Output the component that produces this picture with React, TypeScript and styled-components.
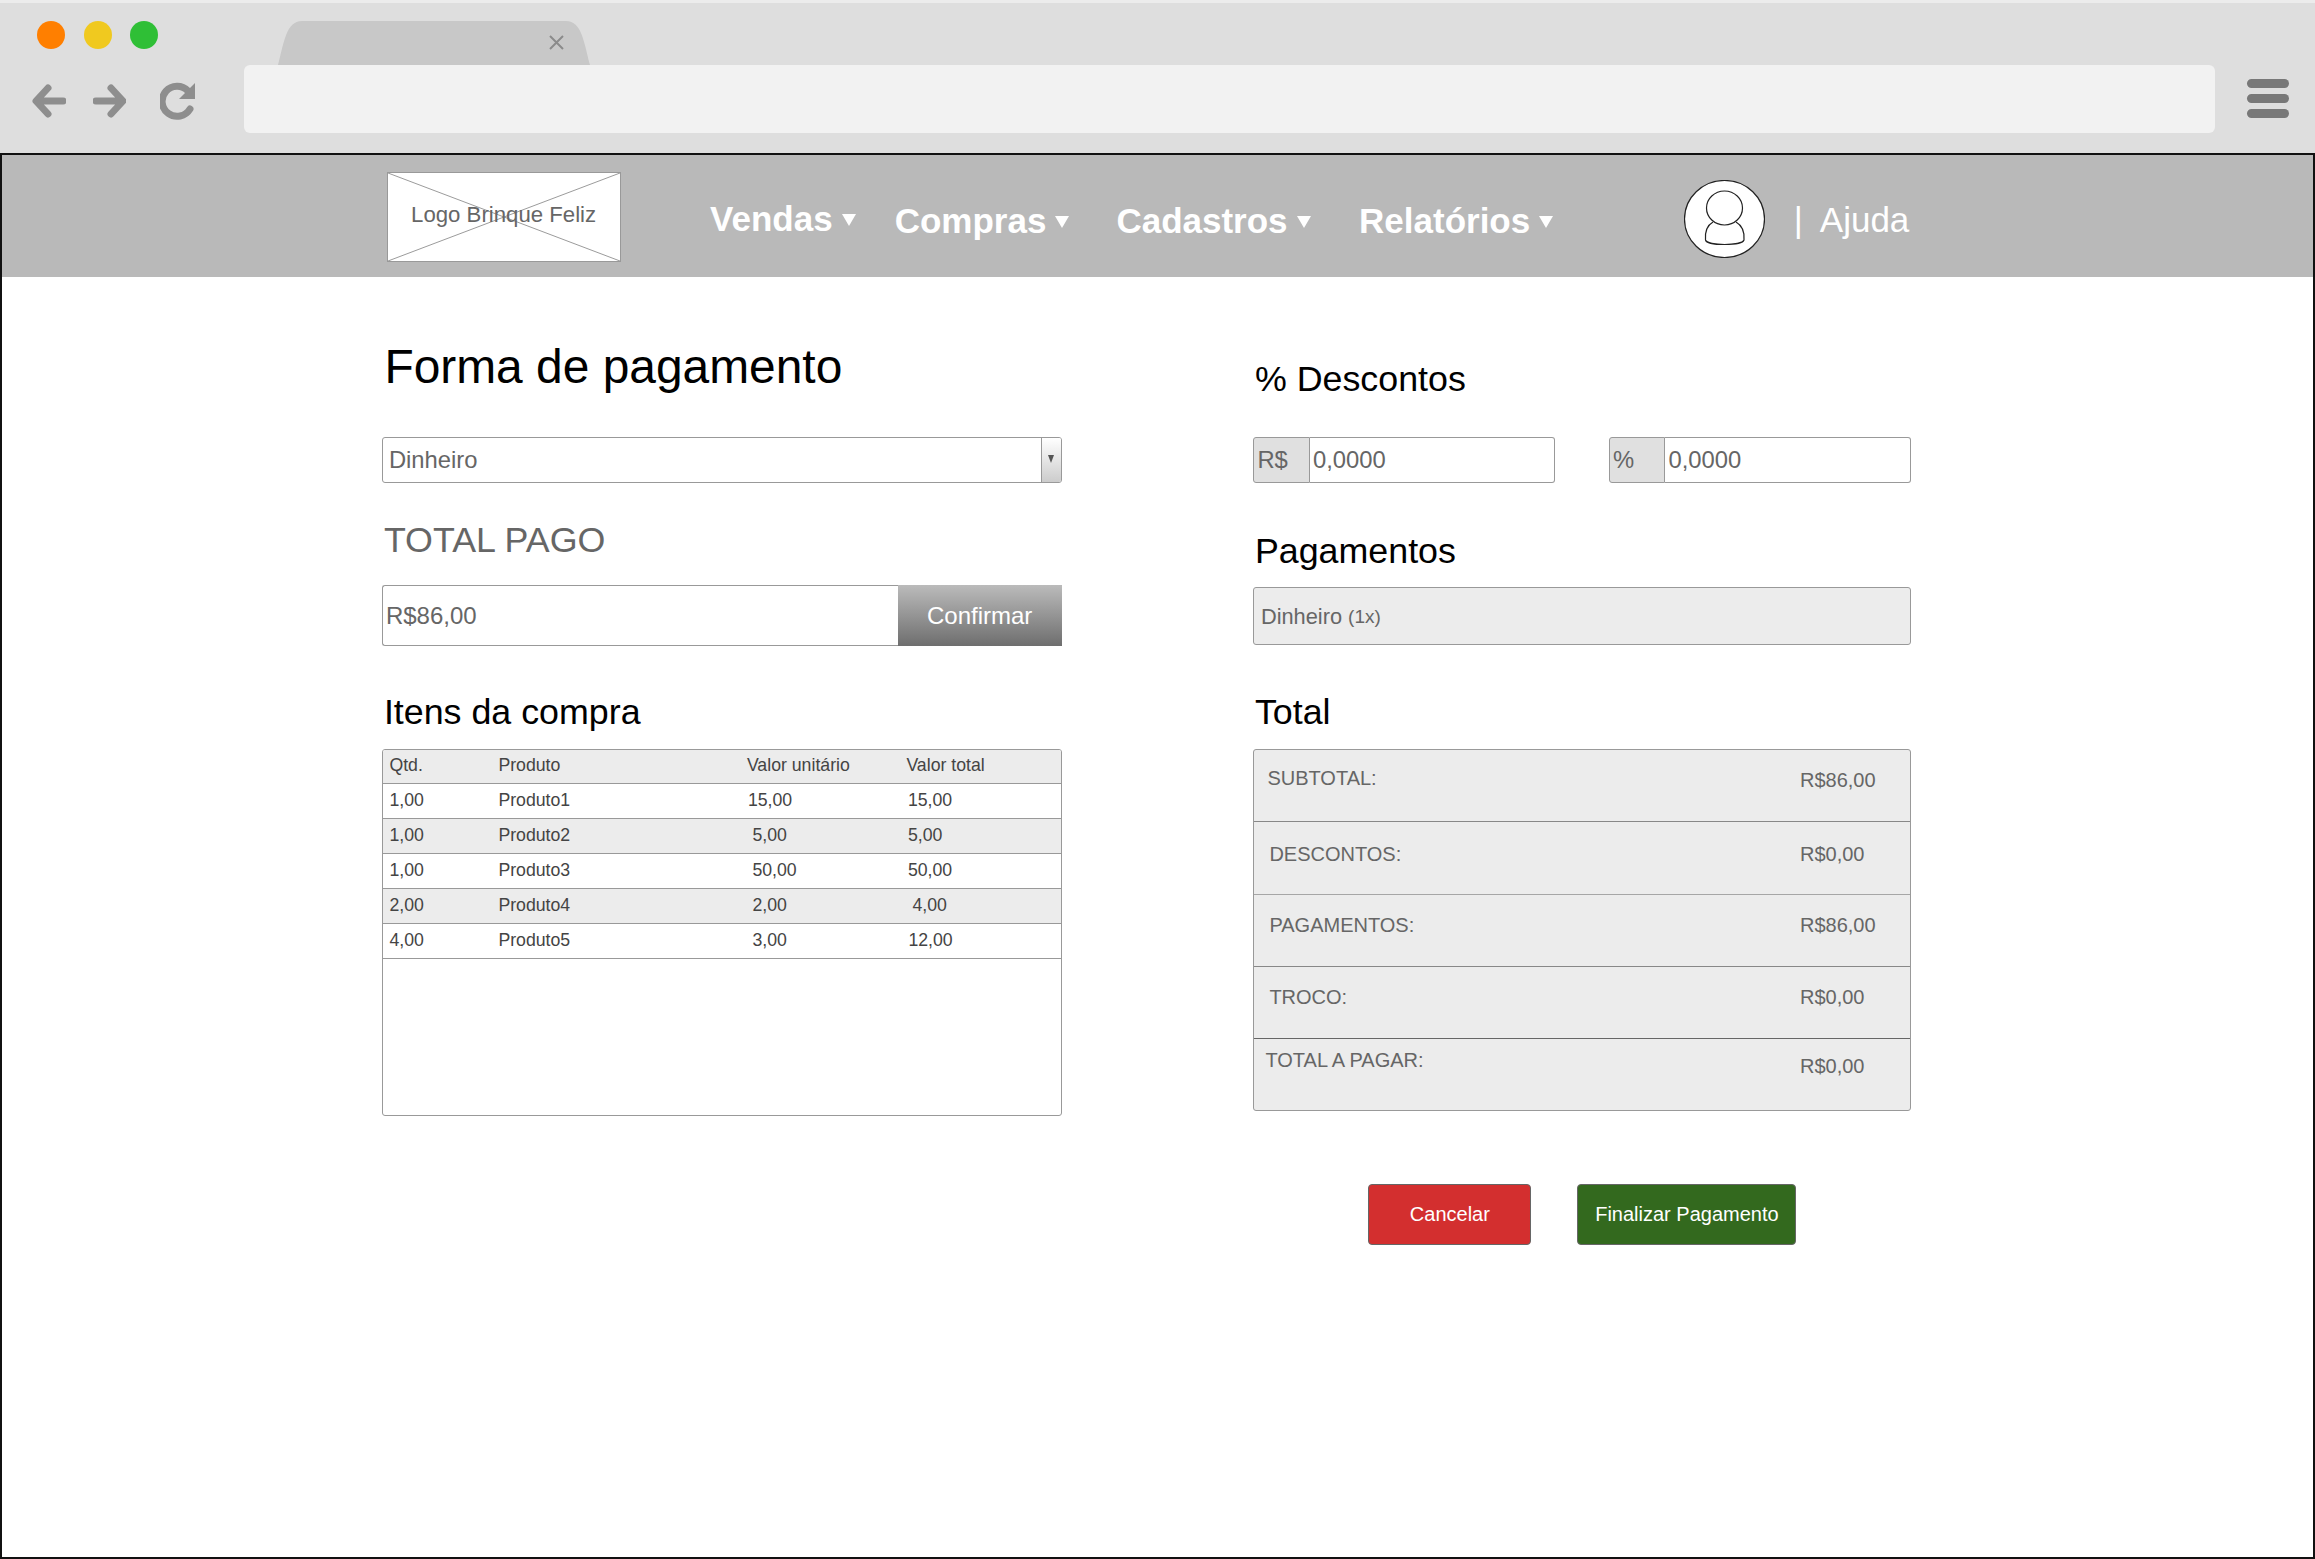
import React from "react";
import styled, { createGlobalStyle } from "styled-components";

const Global = createGlobalStyle`
  html, body { margin: 0; padding: 0; background: #fff; }
  body { font-family: "Liberation Sans", Arial, sans-serif; }
  * { box-sizing: border-box; }
`;

const Page = styled.div`
  width: 2315px;
  height: 1559px;
  display: flex;
  flex-direction: column;
  overflow: hidden;
`;

const ChromeBar = styled.header`
  height: 153px;
  flex: none;
  background: #dedede;
  border-top: 3px solid #ececec;
  display: flex;
  flex-direction: column;
`;

const TabRow = styled.div`
  height: 62px;
  flex: none;
  display: flex;
  align-items: flex-end;
  padding-left: 37px;
  gap: 18.5px;
`;

const Dot = styled.span<{ $color: string }>`
  width: 28px;
  height: 28px;
  border-radius: 50%;
  background: ${(p) => p.$color};
  align-self: flex-start;
  margin-top: 18px;
`;

const TabShape = styled.svg`
  width: 312px;
  height: 44px;
  margin-left: 101.5px;
  display: block;
`;

const Toolbar = styled.div`
  height: 67.5px;
  flex: none;
  display: flex;
  align-items: center;
  padding-left: 32px;
`;

const NavIcon = styled.svg<{ $left: number; $width: number }>`
  width: ${(p) => p.$width}px;
  height: 38px;
  margin-left: ${(p) => p.$left}px;
  margin-top: 4px;
  flex: none;
`;

const UrlBar = styled.div`
  width: 1971px;
  height: 67.5px;
  margin-left: 47.5px;
  background: #f2f2f2;
  border-radius: 6px;
  flex: none;
`;

const Burger = styled.div`
  margin-left: 32px;
  width: 42px;
  display: flex;
  flex-direction: column;
  gap: 6px;
`;

const BurgerBar = styled.span`
  height: 9px;
  border-radius: 5px;
  background: #787878;
`;

const Frame = styled.div`
  flex: 1;
  border: 2px solid #111;
  border-top-width: 2.5px;
  border-right-width: 2.5px;
  display: flex;
  flex-direction: column;
  min-height: 0;
`;

const NavBar = styled.nav`
  height: 122px;
  flex: none;
  background: #b9b9b9;
  display: flex;
  align-items: center;
  padding-left: 384.6px;
  color: #fff;
`;

const Logo = styled.div`
  position: relative;
  width: 234px;
  height: 90px;
  margin-top: 2px;
  flex: none;
  background: #fff;
  border: 1px solid #999;
  display: flex;
  align-items: center;
  justify-content: center;
  font-size: 22.2px;
  color: #666;
`;

const LogoCross = styled.svg`
  position: absolute;
  inset: 0;
  width: 100%;
  height: 100%;
`;

const LogoText = styled.span`
  position: relative;
  margin-top: -4px;
  white-space: nowrap;
`;

const MenuList = styled.div`
  display: flex;
  margin-left: 89.5px;
`;

const MenuItem = styled.div<{ $left?: number; $drop?: number }>`
  display: flex;
  align-items: center;
  margin-left: ${(p) => p.$left ?? 0}px;
  margin-top: ${(p) => p.$drop ?? 0}px;
  font-size: 35px;
  font-weight: 700;
  line-height: 42px;
  white-space: nowrap;
`;

const Caret = styled.span`
  width: 0;
  height: 0;
  margin-left: 9px;
  margin-top: 1px;
  border-left: 7px solid transparent;
  border-right: 7px solid transparent;
  border-top: 12px solid #fff;
`;

const Avatar = styled.svg`
  width: 81px;
  height: 78px;
  margin-left: 130.5px;
  margin-top: 5px;
  flex: none;
`;

const HelpLink = styled.div`
  display: flex;
  margin-left: 29px;
  margin-top: 8px;
  font-size: 35px;
  line-height: 42px;
  gap: 17px;
`;

const Main = styled.main`
  flex: 1;
  display: flex;
  align-items: flex-start;
  padding-left: 380.4px;
`;

const LeftColumn = styled.section`
  width: 679.5px;
  flex: none;
  padding-top: 61.5px;
`;

const RightColumn = styled.section`
  width: 657.5px;
  flex: none;
  margin-left: 191.5px;
  padding-top: 81px;
`;

const PageTitle = styled.h1`
  margin: 0 0 0 2px;
  font-size: 47.9px;
  line-height: 56px;
  font-weight: 400;
  color: #000;
`;

const Heading = styled.h2<{ $top: number; $muted?: boolean }>`
  margin: ${(p) => p.$top}px 0 0 1.5px;
  font-size: 35.8px;
  line-height: 42px;
  font-weight: 400;
  color: ${(p) => (p.$muted ? "#666" : "#000")};
`;

const SelectBox = styled.div`
  height: 46px;
  margin-top: 42.5px;
  border: 1px solid #999;
  border-radius: 3px;
  display: flex;
  align-items: center;
  justify-content: space-between;
  padding-left: 5.5px;
  font-size: 23.8px;
  color: #666;
  overflow: hidden;
`;

const SelectButton = styled.span`
  width: 20px;
  height: 100%;
  border-left: 1px solid #999;
  background: linear-gradient(#fff, #ccc);
  display: flex;
  justify-content: center;
  padding-top: 17px;
  &::after {
    content: "";
    width: 0;
    height: 0;
    border-left: 3px solid transparent;
    border-right: 3px solid transparent;
    border-top: 8px solid #555;
  }
`;

const PaidRow = styled.div`
  height: 61px;
  margin-top: 24px;
  display: flex;
`;

const PaidInput = styled.div`
  flex: 1;
  border: 1px solid #999;
  border-right: none;
  border-radius: 3px 0 0 3px;
  display: flex;
  align-items: center;
  padding-left: 2.5px;
  font-size: 24px;
  color: #666;
`;

const ConfirmButton = styled.button`
  width: 163.5px;
  border: none;
  background: linear-gradient(#bbb, #6e6e6e);
  color: #fff;
  font: 24px "Liberation Sans", Arial, sans-serif;
  padding: 0 1px 0 0;
`;

const ItemsTable = styled.div`
  height: 366.5px;
  margin-top: 16px;
  border: 1px solid #999;
  border-radius: 3px;
  overflow: hidden;
`;

const ItemRow = styled.div<{ $shaded?: boolean }>`
  height: 35px;
  display: grid;
  grid-template-columns: 109px 248.5px 159.5px 1fr;
  padding-left: 6px;
  background: ${(p) => (p.$shaded ? "#ececec" : "#fff")};
  border-bottom: 1.5px solid #999;
  font-size: 17.7px;
  line-height: 32.5px;
  color: #444;
  &:first-child {
    height: 34px;
    line-height: 31px;
  }
`;

const Cell = styled.span<{ $indent?: number }>`
  padding-left: ${(p) => p.$indent ?? 0}px;
  white-space: nowrap;
`;

const DiscountRow = styled.div`
  margin-top: 37px;
  display: flex;
  justify-content: space-between;
`;

const DiscountGroup = styled.div`
  width: 302px;
  height: 46px;
  display: flex;
  font-size: 23.8px;
  color: #666;
`;

const DiscountAddon = styled.span`
  width: 56.5px;
  flex: none;
  background: #e0e0e0;
  border: 1px solid #999;
  border-radius: 3px 0 0 3px;
  display: flex;
  align-items: center;
  padding-left: 3px;
`;

const DiscountInput = styled.span`
  flex: 1;
  border: 1px solid #999;
  border-left: none;
  border-radius: 0 3px 3px 0;
  display: flex;
  align-items: center;
  padding-left: 3px;
`;

const PaymentsBox = styled.div`
  height: 58px;
  margin-top: 15px;
  padding: 2px 0 0 6.5px;
  background: #ececec;
  border: 1px solid #999;
  border-radius: 3px;
  display: flex;
  align-items: center;
  font-size: 21.8px;
  color: #666;
`;

const PaymentCount = styled.span`
  margin-left: 6px;
  font-size: 19px;
`;

const SummaryBox = styled.div`
  height: 361.6px;
  margin-top: 16.4px;
  background: #ececec;
  border: 1px solid #999;
  border-radius: 3px;
  overflow: hidden;
`;

const SummaryRow = styled.div<{ $line?: string }>`
  height: 72.2px;
  display: grid;
  grid-template-columns: 545.6px 1fr;
  border-top: 1.5px solid ${(p) => p.$line ?? "#888"};
  font-size: 20px;
  line-height: 24px;
  color: #666;
  &:first-child {
    border-top: none;
    height: 71px;
  }
`;

const SummaryLabel = styled.span<{ $inset: number; $top: number }>`
  padding: ${(p) => p.$top}px 0 0 ${(p) => p.$inset}px;
  font-size: 20px;
  white-space: nowrap;
`;

const SummaryValue = styled.span<{ $top: number }>`
  padding-top: ${(p) => p.$top}px;
`;

const ActionRow = styled.div`
  margin-top: 73px;
  padding-left: 115px;
  display: flex;
  gap: 46px;
`;

const ActionButton = styled.button<{ $color: string; $width: number }>`
  width: ${(p) => p.$width}px;
  height: 61px;
  padding: 0;
  background: ${(p) => p.$color};
  border: 1px solid #666;
  border-radius: 4px;
  color: #fff;
  font: 20px "Liberation Sans", Arial, sans-serif;
`;

const items = [
  ["1,00", "Produto1", "15,00", 1, "15,00", 1.5, false],
  ["1,00", "Produto2", "5,00", 5.5, "5,00", 1.5, true],
  ["1,00", "Produto3", "50,00", 5.5, "50,00", 1.5, false],
  ["2,00", "Produto4", "2,00", 5.5, "4,00", 6, true],
  ["4,00", "Produto5", "3,00", 5.5, "12,00", 2, false],
] as const;

const totals = [
  { label: "SUBTOTAL:", value: "R$86,00", inset: 13, labelTop: 15.2, valueTop: 17.6, line: undefined },
  { label: "DESCONTOS:", value: "R$0,00", inset: 15, labelTop: 20, valueTop: 20, line: undefined },
  { label: "PAGAMENTOS:", value: "R$86,00", inset: 15, labelTop: 18.5, valueTop: 18.5, line: "#a6a6a6" },
  { label: "TROCO:", value: "R$0,00", inset: 15, labelTop: 18.4, valueTop: 18.4, line: undefined },
  { label: "TOTAL A PAGAR:", value: "R$0,00", inset: 11, labelTop: 9.4, valueTop: 15, line: "#666" },
];

export default function App() {
  return (
    <Page>
      <Global />
      <ChromeBar>
        <TabRow>
          <Dot $color="#ff7f00" />
          <Dot $color="#f0c91f" />
          <Dot $color="#2fbf36" />
          <TabShape viewBox="0 0 312 44">
            <path d="M0 44 C6 22 8 0 24 0 H288 C304 0 306 22 312 44 Z" fill="#c8c8c8" />
            <path d="M272 15 L285 28 M285 15 L272 28" stroke="#8b8b8b" strokeWidth="2" />
          </TabShape>
        </TabRow>
        <Toolbar>
          <NavIcon $left={0} $width={34} viewBox="0 0 34 38">
            <path d="M31 19 H5 M16 6 L4 19 L16 32" fill="none" stroke="#8e8e8e" strokeWidth="7" strokeLinecap="round" strokeLinejoin="round" />
          </NavIcon>
          <NavIcon $left={27} $width={33} viewBox="0 0 33 38">
            <path d="M3 19 H29 M18 6 L30 19 L18 32" fill="none" stroke="#8e8e8e" strokeWidth="7" strokeLinecap="round" strokeLinejoin="round" />
          </NavIcon>
          <NavIcon $left={34} $width={36} viewBox="0 0 36 38">
            <path d="M28 9 A15 15 0 1 0 30 27" fill="none" stroke="#8e8e8e" strokeWidth="7" strokeLinecap="round" />
            <path d="M35 1 V17 H19 Z" fill="#8e8e8e" />
          </NavIcon>
          <UrlBar />
          <Burger>
            <BurgerBar />
            <BurgerBar />
            <BurgerBar />
          </Burger>
        </Toolbar>
      </ChromeBar>
      <Frame>
        <NavBar>
          <Logo>
            <LogoCross viewBox="0 0 234 90" preserveAspectRatio="none">
              <path d="M0 0 L234 90 M234 0 L0 90" stroke="#999" strokeWidth="1" />
            </LogoCross>
            <LogoText>Logo Brinque Feliz</LogoText>
          </Logo>
          <MenuList>
            <MenuItem $drop={6}>Vendas<Caret /></MenuItem>
            <MenuItem $left={39} $drop={10}>Compras<Caret /></MenuItem>
            <MenuItem $left={47} $drop={10}>Cadastros<Caret /></MenuItem>
            <MenuItem $left={48.5} $drop={10}>Relatórios<Caret /></MenuItem>
          </MenuList>
          <Avatar viewBox="0 0 81 78">
            <ellipse cx="40.5" cy="39" rx="40" ry="38.5" fill="#fff" stroke="#222" strokeWidth="1.2" />
            <path d="M29 42 C22 46 21 54 21.5 60 C23 66 58 66 60 60 C60.5 54 59 46 52 42" fill="none" stroke="#222" strokeWidth="1.2" />
            <ellipse cx="40.5" cy="28" rx="18" ry="17" fill="#fff" stroke="#222" strokeWidth="1.2" />
          </Avatar>
          <HelpLink>
            <span>|</span>
            <span>Ajuda</span>
          </HelpLink>
        </NavBar>
        <Main>
          <LeftColumn>
            <PageTitle>Forma de pagamento</PageTitle>
            <SelectBox>
              Dinheiro
              <SelectButton />
            </SelectBox>
            <Heading $top={36} $muted>TOTAL PAGO</Heading>
            <PaidRow>
              <PaidInput>R$86,00</PaidInput>
              <ConfirmButton>Confirmar</ConfirmButton>
            </PaidRow>
            <Heading $top={45}>Itens da compra</Heading>
            <ItemsTable>
              <ItemRow $shaded>
                <Cell>Qtd.</Cell>
                <Cell>Produto</Cell>
                <Cell>Valor unitário</Cell>
                <Cell>Valor total</Cell>
              </ItemRow>
              {items.map(([qty, name, unit, unitIndent, total, totalIndent, shaded]) => (
                <ItemRow key={name} $shaded={shaded}>
                  <Cell>{qty}</Cell>
                  <Cell>{name}</Cell>
                  <Cell $indent={unitIndent}>{unit}</Cell>
                  <Cell $indent={totalIndent}>{total}</Cell>
                </ItemRow>
              ))}
            </ItemsTable>
          </LeftColumn>
          <RightColumn>
            <Heading $top={0}>% Descontos</Heading>
            <DiscountRow>
              <DiscountGroup>
                <DiscountAddon>R$</DiscountAddon>
                <DiscountInput>0,0000</DiscountInput>
              </DiscountGroup>
              <DiscountGroup>
                <DiscountAddon>%</DiscountAddon>
                <DiscountInput>0,0000</DiscountInput>
              </DiscountGroup>
            </DiscountRow>
            <Heading $top={47}>Pagamentos</Heading>
            <PaymentsBox>
              Dinheiro<PaymentCount>(1x)</PaymentCount>
            </PaymentsBox>
            <Heading $top={46}>Total</Heading>
            <SummaryBox>
              {totals.map((t) => (
                <SummaryRow key={t.label} $line={t.line}>
                  <SummaryLabel $inset={t.inset} $top={t.labelTop}>{t.label}</SummaryLabel>
                  <SummaryValue $top={t.valueTop}>{t.value}</SummaryValue>
                </SummaryRow>
              ))}
            </SummaryBox>
            <ActionRow>
              <ActionButton $color="#d32f2f" $width={163}>Cancelar</ActionButton>
              <ActionButton $color="#33691e" $width={219}>Finalizar Pagamento</ActionButton>
            </ActionRow>
          </RightColumn>
        </Main>
      </Frame>
    </Page>
  );
}
